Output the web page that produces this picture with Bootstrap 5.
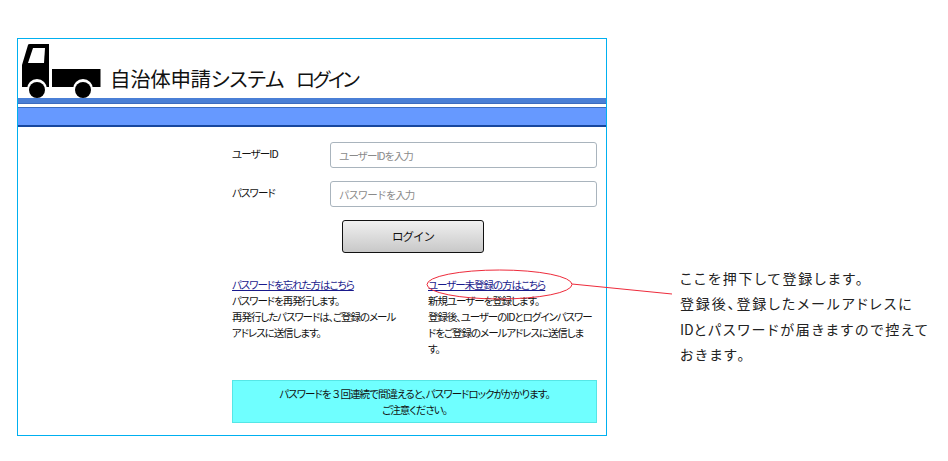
<!DOCTYPE html>
<html lang="ja">
<head>
<meta charset="utf-8">
<title>ログイン</title>
<link href="https://cdn.jsdelivr.net/npm/bootstrap@5.3.0/dist/css/bootstrap.min.css" rel="stylesheet">
<style>
body{background:#fff;color:#111;font-family:"Noto Sans CJK JP","Liberation Sans",sans-serif;font-feature-settings:"palt";overflow:hidden}
.stage{width:948px;height:461px;padding:38px 0 0 17px}
.frame{width:590px;height:398px;border:1px solid #00b0f0}
.head-row{height:59px;padding:5px 0 0 4px}
.truck{width:80px;height:54px;flex:none}
.app-title{font-size:20.5px;font-weight:400;margin:0 0 0 8px;line-height:30px;padding-bottom:4px;letter-spacing:-.35px;white-space:nowrap}
.title-login{margin-left:12px;font-size:19.5px;letter-spacing:-2.4px}
.band{height:29px;background:#6699ff;border-bottom:2px solid #17479e;display:flex;flex-direction:column}
.band-top{height:6px;background:#4a7fd6;border-bottom:1px solid #3c6cc0}
.band-gap{height:3px;background:#fff}
.band-line{height:1px;background:#3c6cc0}
.form-zone{width:365px;margin-left:214px;padding-top:15px}
.field-row{height:26px}
.field-row+.field-row{margin-top:13px}
.field-label{width:98px;font-size:10.5px;letter-spacing:-.9px;margin:0;padding-bottom:3px;font-weight:400}
.field-input{width:267px;height:26px;padding:0 8px;border:1px solid #a9b4bd;border-radius:3px;font-size:10.5px;letter-spacing:-1.1px;color:#333}
.field-input::placeholder{color:#8a8a8a;opacity:1}
.login-btn{width:142px;height:33px;margin:13px 0 0 110px;padding:0;display:block;border:1px solid #111;border-radius:3px;font-size:11.5px;letter-spacing:-1px;font-weight:400;color:#111;background:linear-gradient(#f0f0f0,#c8c8c8)}
.help-row{margin-top:24px;font-size:10.5px;line-height:16px;letter-spacing:-1.05px;height:103px;white-space:nowrap}
.help-left{width:196px}
.help-right{width:169px}
.help-row a{color:#1a1a8c}
.warn-box{height:43px;background:#6fffff;border:1px solid #55e6e6;font-size:10.5px;line-height:16px;letter-spacing:-.95px;color:#111}
.note{margin:228px 0 0 73px;width:255px;font-size:14px;line-height:25.3px;letter-spacing:1.85px;color:#222;font-feature-settings:"normal";white-space:nowrap}
.note-id{letter-spacing:0}
.overlay{position:absolute;left:0;top:0;pointer-events:none}
</style>
</head>
<body>
<div class="stage d-flex position-relative">
  <div class="frame flex-shrink-0">
    <div class="head-row d-flex align-items-end">
      <svg class="truck" viewBox="0 0 80 54" aria-label="トラック">
        <path fill="#000" d="M0 21 6 1Q6 0 8 0H27V43H0Z"/>
        <path fill="#fff" d="M11 4H23L22 19H6Z"/>
        <rect x="30" y="25" width="48.500" height="18" fill="#000"/>
        <circle cx="15" cy="45" r="10" fill="#fff"/><circle cx="15" cy="46" r="8" fill="#000"/>
        <circle cx="61" cy="45" r="10" fill="#fff"/><circle cx="61" cy="46" r="8" fill="#000"/>
      </svg>
      <h1 class="app-title">自治体申請システム<span class="title-login">ログイン</span></h1>
    </div>
    <div class="band"><div class="band-top"></div><div class="band-gap"></div><div class="band-line"></div></div>
    <div class="form-zone">
      <div class="field-row d-flex align-items-center">
        <label class="field-label" for="uid">ユーザーID</label>
        <input id="uid" class="field-input" type="text" placeholder="ユーザーIDを入力">
      </div>
      <div class="field-row d-flex align-items-center">
        <label class="field-label" for="pw">パスワード</label>
        <input id="pw" class="field-input" type="password" placeholder="パスワードを入力">
      </div>
      <button class="login-btn" type="button">ログイン</button>
      <div class="help-row d-flex">
        <div class="help-left"><a href="#">パスワードを忘れた方はこちら</a><br>パスワードを再発行します。<br>再発行したパスワードは、ご登録のメール<br>アドレスに送信します。</div>
        <div class="help-right"><a href="#">ユーザー未登録の方はこちら</a><br>新規ユーザーを登録します。<br>登録後、ユーザーのIDとログインパスワー<br>ドをご登録のメールアドレスに送信しま<br>す。</div>
      </div>
      <div class="warn-box text-center d-flex flex-column justify-content-center">
        <div>パスワードを ３ 回連続で間違えると、パスワードロックがかかります。</div>
        <div>ご注意ください。</div>
      </div>
    </div>
  </div>
  <div class="note">ここを押下して登録します。<br>登録後、登録したメールアドレスに<br><span class="note-id">ID</span>とパスワードが届きますので控えて<br>おきます。</div>
  <svg class="overlay" width="948" height="461" viewBox="0 0 948 461">
    <ellipse cx="499.500" cy="284.500" rx="72.500" ry="14.500" fill="none" stroke="#ee2b3b" stroke-width="1"/>
    <line x1="572" y1="284" x2="672" y2="294" stroke="#ee2b3b" stroke-width="1"/>
  </svg>
</div>
</body>
</html>
